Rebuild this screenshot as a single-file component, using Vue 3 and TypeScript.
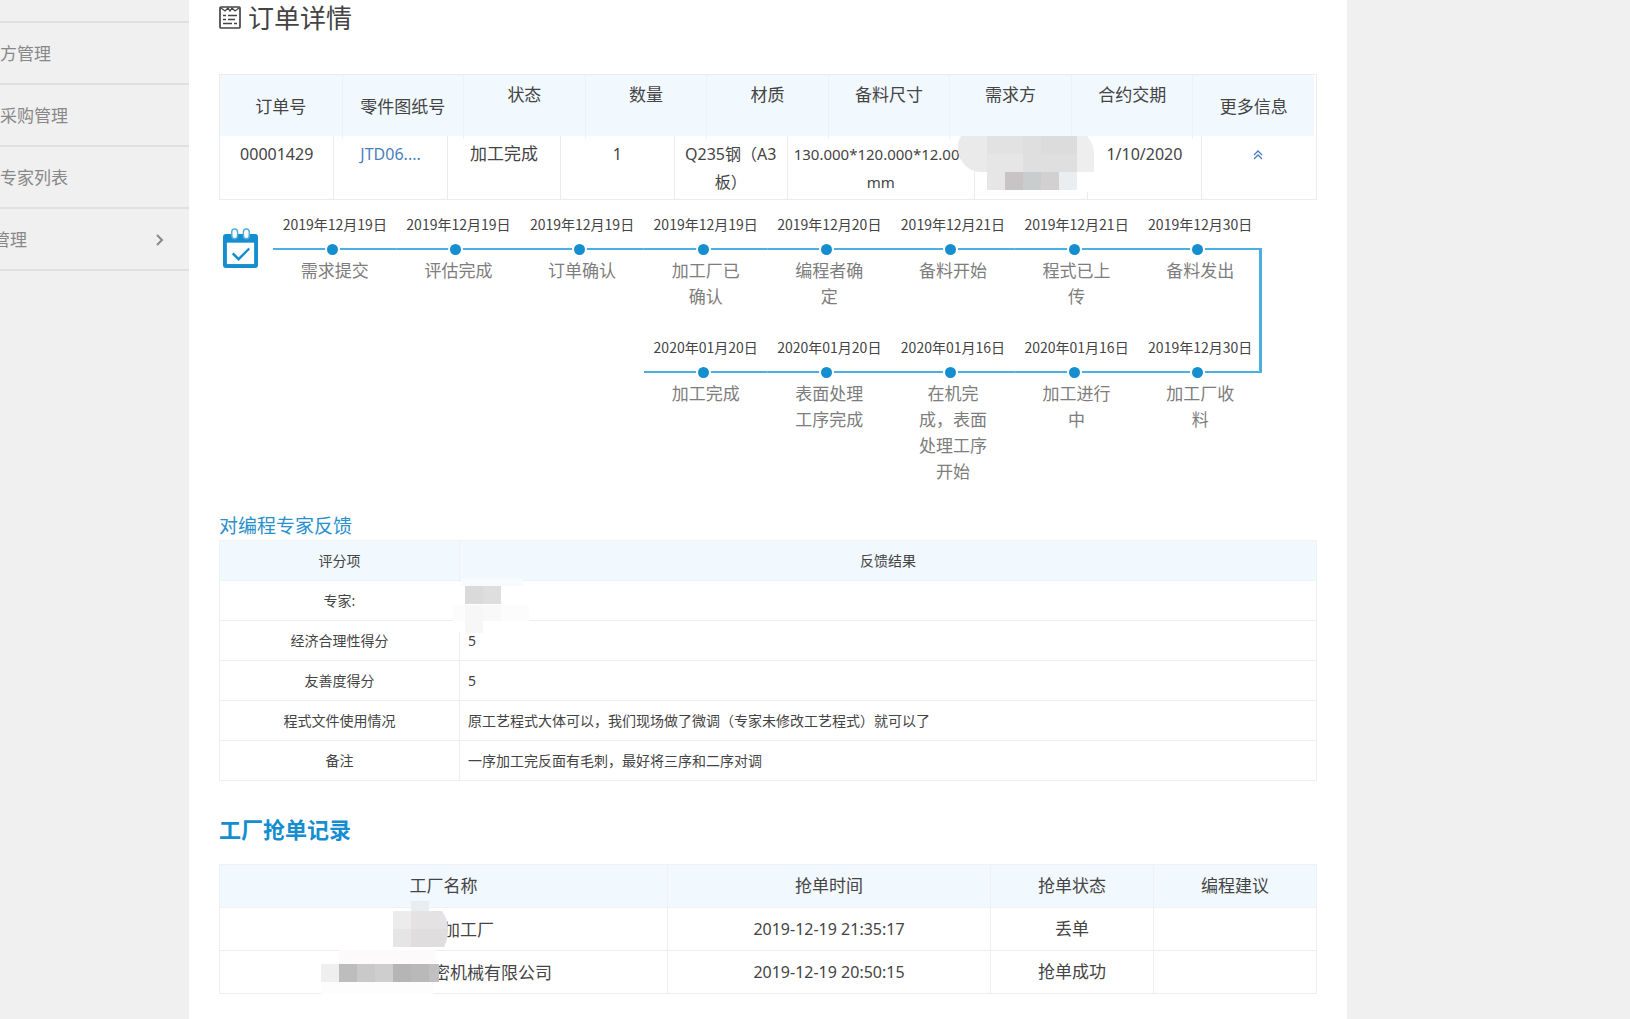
<script setup lang="ts">
interface MenuItem {
  label: string
  nested?: boolean
}
interface Step {
  date: string
  label: string
}
interface Block {
  x: number
  y: number
  w: number
  h: number
  fill: string
}

const menu: MenuItem[] = [
  { label: '方管理' },
  { label: '采购管理' },
  { label: '专家列表' },
  { label: '管理', nested: true },
]

const orderHeads: string[] = ['订单号', '零件图纸号', '状态', '数量', '材质', '备料尺寸', '需求方', '合约交期', '更多信息']
const middleHeads: string[] = ['订单号', '零件图纸号', '更多信息']

const outbound: Step[] = [
  { date: '2019年12月19日', label: '需求提交' },
  { date: '2019年12月19日', label: '评估完成' },
  { date: '2019年12月19日', label: '订单确认' },
  { date: '2019年12月19日', label: '加工厂已确认' },
  { date: '2019年12月20日', label: '编程者确定' },
  { date: '2019年12月21日', label: '备料开始' },
  { date: '2019年12月21日', label: '程式已上传' },
  { date: '2019年12月30日', label: '备料发出' },
]
const inbound: Step[] = [
  { date: '2020年01月20日', label: '加工完成' },
  { date: '2020年01月20日', label: '表面处理工序完成' },
  { date: '2020年01月16日', label: '在机完成，表面处理工序开始' },
  { date: '2020年01月16日', label: '加工进行中' },
  { date: '2019年12月30日', label: '加工厂收料' },
]

const scores: [string, string][] = [
  ['专家:', ''],
  ['经济合理性得分', '5'],
  ['友善度得分', '5'],
  ['程式文件使用情况', '原工艺程式大体可以，我们现场做了微调（专家未修改工艺程式）就可以了'],
  ['备注', '一序加工完反面有毛刺，最好将三序和二序对调'],
]

const buyerMask: Block[] = [
  { x: 30, y: 0, w: 36, h: 18, fill: '#e2e2e2' },
  { x: 66, y: 0, w: 18, h: 36, fill: '#e0dfdf' },
  { x: 84, y: 0, w: 36, h: 18, fill: '#dcdcdc' },
  { x: 30, y: 18, w: 36, h: 18, fill: '#e6e6e6' },
  { x: 84, y: 18, w: 36, h: 18, fill: '#dfdfdf' },
  { x: 30, y: 36, w: 18, h: 18, fill: '#e6e6e6' },
  { x: 48, y: 36, w: 18, h: 18, fill: '#c8c4c5' },
  { x: 66, y: 36, w: 18, h: 18, fill: '#cacdce' },
  { x: 84, y: 36, w: 18, h: 18, fill: '#d2d0d1' },
  { x: 102, y: 36, w: 18, h: 18, fill: '#ebeef0' },
]
const companyMask: Block[] = [
  { x: 0, y: 14, w: 18, h: 18, fill: '#f0efef' },
  { x: 18, y: 14, w: 18, h: 18, fill: '#bdbdbd' },
  { x: 36, y: 14, w: 18, h: 18, fill: '#c9c9c9' },
  { x: 54, y: 14, w: 18, h: 18, fill: '#cecece' },
  { x: 72, y: 14, w: 18, h: 18, fill: '#b5b5b5' },
  { x: 90, y: 14, w: 18, h: 18, fill: '#b9b9b9' },
  { x: 108, y: 14, w: 10, h: 18, fill: '#c0c0c0' },
]
</script>

<template>
  <div class="page">
    <nav class="sidebar">
      <a v-for="item in menu" :key="item.label" href="#" class="menu-item">
        <span :class="['menu-label', { nested: item.nested }]">{{ item.label }}</span>
        <svg v-if="item.nested" class="chevron" width="10" height="14" viewBox="0 0 10 14">
          <path d="M2 2l5 5-5 5" fill="none" stroke="#888" stroke-width="2" />
        </svg>
      </a>
    </nav>

    <main class="panel">
      <h1 class="title">
        <svg width="22" height="24" viewBox="0 0 22 24" fill="none" stroke="#444" stroke-width="1.700">
          <rect x="1" y="1" width="20" height="21" rx="1" />
          <path d="M2 2l4 3 3-3 2 3 2-3 3 3 4-3" stroke-width="1.300" />
          <path d="M4 9.500h3M9 9.500h9M4 13.500h3M9 13.500h7M4 17.500h9M15 17.500h3" stroke-width="1.400" />
        </svg>
        订单详情
      </h1>

      <table class="order">
        <thead>
          <tr>
            <th v-for="head in orderHeads" :key="head" :class="{ middle: middleHeads.includes(head) }">{{ head }}</th>
          </tr>
        </thead>
        <tbody>
          <tr>
            <td class="num">00001429</td>
            <td class="num"><a href="#">JTD06....</a></td>
            <td>加工完成</td>
            <td class="num">1</td>
            <td class="num">Q235钢（A3板）</td>
            <td class="size">130.000*120.000*12.000 mm</td>
            <td class="masked">
              <svg class="buyer-mask" width="138" height="60" viewBox="0 0 138 60">
                <path d="M120 30h16v26h-16z" fill="#fff" />
                <path d="M4 0h26v36H22Q6 34 1 16Q0 6 4 0z" fill="#eaeaea" />
                <path d="M120 0h10q8 10 7 20v16h-17z" fill="#eeeeee" />
                <rect v-for="(b, i) in buyerMask" :key="i" :x="b.x" :y="b.y" :width="b.w" :height="b.h" :fill="b.fill" />
              </svg>
            </td>
            <td class="num">1/10/2020</td>
            <td>
              <a href="#" aria-label="收起">
                <svg width="10" height="10" viewBox="0 0 10 10" fill="none" stroke="#4a7fbf" stroke-width="1.300">
                  <path d="M1 5l4-4 4 4M1 9l4-4 4 4" />
                </svg>
              </a>
            </td>
          </tr>
        </tbody>
      </table>

      <section class="progress">
        <svg class="calendar" width="35" height="41" viewBox="0 0 36 42">
          <rect x="0" y="6" width="36" height="35" rx="3" fill="#148ecf" />
          <rect x="4" y="15" width="28" height="22" fill="#fff" />
          <rect x="9" y="1" width="6" height="10" rx="3" fill="#fff" stroke="#4fadde" stroke-width="1.500" />
          <rect x="21" y="1" width="6" height="10" rx="3" fill="#fff" stroke="#4fadde" stroke-width="1.500" />
          <path d="M10 26l6 6 11-11" fill="none" stroke="#148ecf" stroke-width="2.500" />
        </svg>
        <div class="track">
          <ol class="steps">
            <li v-for="(step, i) in outbound" :key="i">
              <time>{{ step.date }}</time>
              <span class="rail"><i class="dot"></i></span>
              <span class="label">{{ step.label }}</span>
            </li>
          </ol>
          <ol class="steps back">
            <li v-for="(step, i) in inbound" :key="i">
              <time>{{ step.date }}</time>
              <span class="rail"><i class="dot"></i></span>
              <span class="label">{{ step.label }}</span>
            </li>
          </ol>
        </div>
      </section>

      <h2 class="feedback-title">对编程专家反馈</h2>
      <table class="grid feedback">
        <colgroup>
          <col class="col-item" />
          <col />
        </colgroup>
        <thead>
          <tr>
            <th>评分项</th>
            <th>反馈结果</th>
          </tr>
        </thead>
        <tbody>
          <tr v-for="(row, i) in scores" :key="row[0]">
            <td>{{ row[0] }}</td>
            <td class="result">
              {{ row[1] }}
              <svg v-if="i === 0" class="expert-mask" width="80" height="56" viewBox="0 0 80 56">
                <path d="M6 4h2v50H6zM8 41h64v4H8z" fill="#fff" />
                <rect x="8" y="0" width="62" height="8" fill="#f7fbfe" />
                <rect x="0" y="27" width="76" height="16" fill="#fcfcfc" />
                <rect x="12" y="27" width="18" height="28" fill="#f7f7f7" />
                <rect x="30" y="27" width="18" height="16" fill="#f9f9f9" />
                <rect x="12" y="8" width="18" height="18" fill="#dadada" />
                <rect x="30" y="8" width="18" height="18" fill="#dedede" />
              </svg>
            </td>
          </tr>
        </tbody>
      </table>

      <h2 class="record-title">工厂抢单记录</h2>
      <table class="grid records">
        <colgroup>
          <col />
          <col class="col-time" />
          <col class="col-state" />
          <col class="col-state" />
        </colgroup>
        <thead>
          <tr>
            <th>工厂名称</th>
            <th>抢单时间</th>
            <th>抢单状态</th>
            <th>编程建议</th>
          </tr>
        </thead>
        <tbody>
          <tr>
            <td>
              <span class="company">
                <svg class="mask" width="56" height="58" viewBox="0 0 56 58">
                  <rect x="18" y="0" width="18" height="10" fill="#e9edf0" />
                  <rect x="0" y="10" width="18" height="18" fill="#ececec" />
                  <rect x="0" y="28" width="18" height="18" fill="#e6e5e5" />
                  <rect x="18" y="10" width="18" height="18" fill="#e4e2e2" />
                  <rect x="18" y="28" width="18" height="18" fill="#dfdddd" />
                  <path d="M36 10h13q6 8 6 18H36z" fill="#e4e2e3" />
                  <path d="M36 28h19q0 10-4 18H36z" fill="#dfddde" />
                </svg>
                加工厂
              </span>
            </td>
            <td class="num">2019-12-19 21:35:17</td>
            <td>丢单</td>
            <td></td>
          </tr>
          <tr>
            <td>
              <span class="company wide">
                <svg class="mask" width="118" height="46" viewBox="0 0 118 46">
                  <rect x="18" y="0" width="96" height="14" fill="#fcfafb" />
                  <rect x="0" y="32" width="112" height="12" fill="#fdfdfd" />
                  <rect v-for="(b, i) in companyMask" :key="i" :x="b.x" :y="b.y" :width="b.w" :height="b.h" :fill="b.fill" />
                </svg>
                密机械有限公司
              </span>
            </td>
            <td class="num">2019-12-19 20:50:15</td>
            <td>抢单成功</td>
            <td></td>
          </tr>
        </tbody>
      </table>
    </main>
  </div>
</template>

<style>
body {
  background: #f0f0f0;
}
</style>

<style scoped>
.page {
  display: grid;
  grid-template-columns: 189px minmax(0, 1fr) 283px;
  min-height: 100vh;
  color: #444;
  font-family: "Noto Sans", "Noto Sans CJK SC", sans-serif;
  font-size: 17px;
  line-height: 28px;
}
a {
  color: #4a7fbf;
  text-decoration: none;
}

.sidebar {
  padding-top: 21px;
  overflow: hidden;
}
.menu-item {
  display: flex;
  align-items: center;
  justify-content: space-between;
  box-sizing: border-box;
  height: 62px;
  padding: 2px 24px 0 0;
  border-top: 2px solid #e0e0e0;
  color: #888;
}
.menu-item:last-child {
  height: 64px;
  border-bottom: 2px solid #e0e0e0;
}
.menu-label.nested {
  margin-left: -7px;
}

.panel {
  padding: 0 30px 24px;
  background: #fff;
}
.title {
  display: flex;
  align-items: center;
  gap: 7px;
  margin: 0 0 38px;
  font-size: 26px;
  font-weight: 400;
  line-height: 36px;
}

table {
  width: 100%;
  border-collapse: collapse;
}
th {
  font-weight: 400;
}
.num {
  font-size: 16px;
}

.order {
  display: block;
  box-sizing: border-box;
  border: 1px solid #ececec;
}
.order thead,
.order tbody {
  display: block;
}
.order tr {
  display: grid;
  margin-right: 2px;
  text-align: center;
}
.order thead tr {
  grid-template-columns: repeat(9, minmax(0, 1fr));
  height: 61px;
  background: #f1f8fe;
}
.order tbody tr {
  grid-template-columns: repeat(5, minmax(0, 1fr)) 187px repeat(3, minmax(0, 1fr));
  height: 63px;
}
.order th {
  padding: 6px 0;
}
.order th.middle {
  padding: 18px 0;
}
.order th + th {
  border-left: 1px solid #eaf2f8;
}
.order td {
  padding: 4px 6px;
}
.order td + td {
  border-left: 1px solid #ececec;
}
.order .size {
  padding: 4px 0;
  font-size: 15px;
}
.order .masked {
  position: relative;
}
.buyer-mask {
  position: absolute;
  top: 0;
  left: -18px;
}

.progress {
  display: flex;
  padding: 11px 55px 0 0;
}
.calendar {
  flex: none;
  margin: 17px 15px 0 4px;
}
.track {
  position: relative;
  flex: 1;
  display: grid;
  row-gap: 24px;
}
.track::after {
  content: "";
  position: absolute;
  top: 37px;
  right: 0;
  width: 3px;
  height: 125px;
  background: #4bafe3;
}
.steps {
  display: grid;
  grid-template-columns: repeat(8, minmax(0, 1fr));
  margin: 0;
  padding: 0;
  list-style: none;
  line-height: 26px;
}
.steps.back li:first-child {
  grid-column-start: 4;
}
.steps li {
  display: flex;
  flex-direction: column;
  align-items: center;
}
time {
  font-family: "Noto Sans CJK SC", sans-serif;
  font-size: 14px;
  white-space: nowrap;
}
.rail {
  display: flex;
  align-items: center;
  justify-content: center;
  align-self: stretch;
  height: 24px;
  margin-bottom: -3px;
  background: linear-gradient(#4bafe3, #4bafe3) center / 100% 2px no-repeat;
}
.dot {
  width: 11px;
  height: 11px;
  margin-right: 5px;
  border: 2px solid #fff;
  border-radius: 50%;
  background: #148ecf;
}
.label {
  width: 70px;
  color: #7d7d7d;
  text-align: center;
}

.feedback-title {
  margin: 28px 0 1px;
  color: #2a90cc;
  font-size: 19px;
  font-weight: 400;
  line-height: 26px;
}
.grid {
  table-layout: fixed;
  text-align: center;
}
.grid th,
.grid td {
  padding: 0 8px;
  border: 1px solid #eeeeee;
}
.grid th {
  border-color: #ecf2f7;
  background: #f1f8fe;
}
.feedback {
  font-size: 14px;
}
.feedback th,
.feedback td {
  height: 39px;
}
.feedback .result {
  position: relative;
  text-align: left;
}
.col-item {
  width: 240px;
}
.expert-mask {
  position: absolute;
  z-index: 1;
  top: -3px;
  left: -7px;
}

.record-title {
  margin: 32px 0 19px;
  color: #148ecf;
  font-size: 22px;
  font-weight: 700;
  line-height: 32px;
}
.records th,
.records td {
  height: 42px;
}
.col-time {
  width: 323px;
}
.col-state {
  width: 163px;
}
.company {
  display: inline-flex;
  align-items: center;
  height: 28px;
  vertical-align: middle;
}
.company.wide {
  margin-left: -14px;
}
.mask {
  position: relative;
  flex: none;
  margin-right: -6px;
}
</style>
